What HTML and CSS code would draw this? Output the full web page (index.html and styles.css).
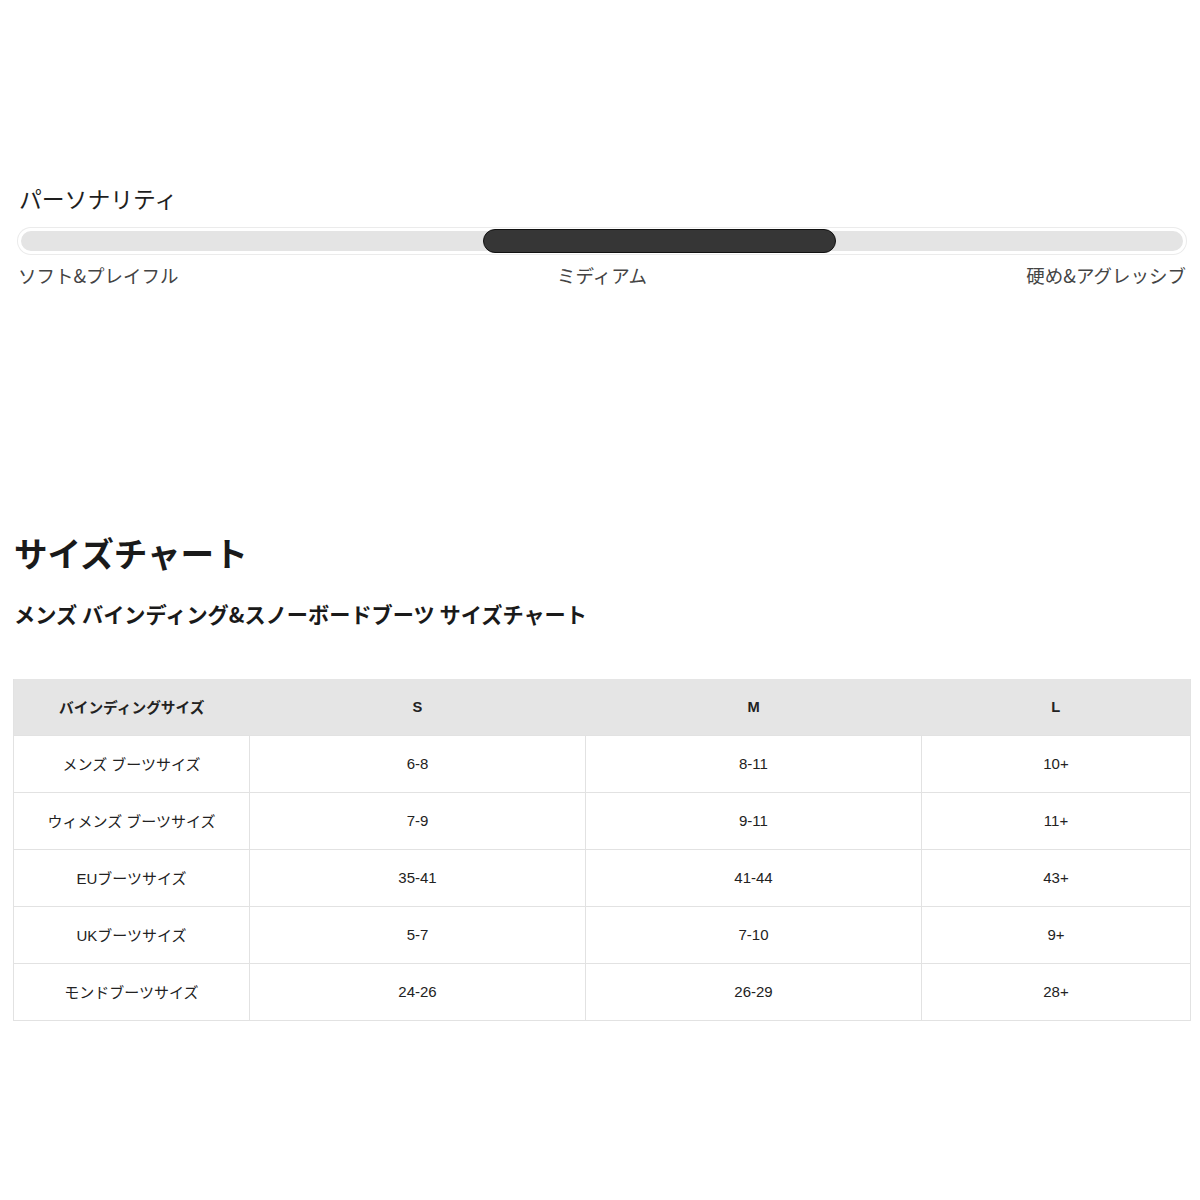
FILE: index.html
```html
<!DOCTYPE html>
<html lang="ja">
<head>
<meta charset="utf-8">
<link rel="stylesheet" href="styles.css">
</head>
<body>
<section class="personality">
  <h2 class="p-title">パーソナリティ</h2>
  <div class="track">
    <div class="thumb"></div>
  </div>
  <div class="labels">
    <span class="left">ソフト&amp;プレイフル</span>
    <span class="mid">ミディアム</span>
    <span class="right">硬め&amp;アグレッシブ</span>
  </div>
</section>
<section class="chart">
  <h2 class="c-title">サイズチャート</h2>
  <h3 class="c-sub">メンズ バインディング&amp;スノーボードブーツ サイズチャート</h3>
  <table class="size-table">
    <colgroup>
      <col class="c1"><col class="c2"><col class="c3"><col class="c4">
    </colgroup>
    <thead>
      <tr><th>バインディングサイズ</th><th>S</th><th>M</th><th>L</th></tr>
    </thead>
    <tbody>
      <tr><td>メンズ ブーツサイズ</td><td>6-8</td><td>8-11</td><td>10+</td></tr>
      <tr><td>ウィメンズ ブーツサイズ</td><td>7-9</td><td>9-11</td><td>11+</td></tr>
      <tr><td>EUブーツサイズ</td><td>35-41</td><td>41-44</td><td>43+</td></tr>
      <tr><td>UKブーツサイズ</td><td>5-7</td><td>7-10</td><td>9+</td></tr>
      <tr><td>モンドブーツサイズ</td><td>24-26</td><td>26-29</td><td>28+</td></tr>
    </tbody>
  </table>
</section>
</body>
</html>
```
FILE: styles.css
```css
* { box-sizing: border-box; }
html, body { margin: 0; padding: 0; background: #fff; }
body {
  font-family: "Liberation Sans", Arial, "Noto Sans CJK JP", sans-serif;
  color: #222;
}
.personality {
  padding: 184px 14px 0 18px;
}
.p-title {
  margin: 0 0 14px 1px;
  font-family: "Noto Sans CJK JP", sans-serif;
  font-weight: 400;
  font-size: 22.8px;
  line-height: 30px;
  color: #1e1e1e;
}
.track {
  position: relative;
  height: 26px;
  border-radius: 13px;
  background: #e4e4e4;
  border: 3px solid #fff;
  box-shadow: 0 0 0 1px #ebebeb;
}
.thumb {
  position: absolute;
  left: 462px;
  top: -2px;
  width: 353px;
  height: 24px;
  border-radius: 12px;
  background: #363636;
  border: 1px solid #111;
}
.labels {
  margin-top: 9px;
  display: grid;
  grid-template-columns: 1fr auto 1fr;
  font-family: "Noto Sans CJK JP", sans-serif;
  font-size: 18.5px;
  line-height: 24px;
  color: #444;
}
.labels .left { justify-self: start; }
.labels .mid { justify-self: center; }
.labels .right { justify-self: end; }
.chart {
  padding: 246px 10px 0 13px;
}
.c-title {
  margin: 0 0 27px 1px;
  font-family: "Noto Sans CJK JP", sans-serif;
  font-weight: 700;
  font-size: 33.6px;
  line-height: 40px;
  color: #1a1a1a;
}
.c-sub {
  margin: 0 0 51px 1px;
  font-family: "Noto Sans CJK JP", sans-serif;
  font-weight: 700;
  font-size: 21.2px;
  line-height: 28px;
  color: #1a1a1a;
}
.size-table {
  width: 1177px;
  border-collapse: collapse;
  table-layout: fixed;
  border: 1px solid #e2e2e2;
  border-top: none;
  box-shadow: 0 1px 0 #ececec;
}
.c1 { width: 236px; }
.c2 { width: 336px; }
.c3 { width: 336px; }
.c4 { width: 269px; }
.size-table th {
  background: #e5e5e5;
  height: 56px;
  font-size: 14.7px;
  font-weight: 700;
  color: #222;
  text-align: center;
  padding: 0;
}
.size-table td {
  height: 57px;
  border: 1px solid #e2e2e2;
  text-align: center;
  font-size: 15px;
  color: #222;
  padding: 0;
}
```
